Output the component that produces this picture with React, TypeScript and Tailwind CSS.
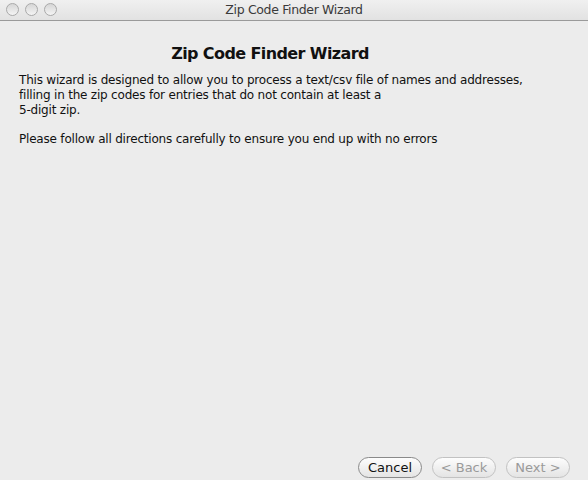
import React from "react";

function Light() {
  return (
    <div className="w-[13px] h-[13px] rounded-full border border-[#a9a9a9] bg-gradient-to-b from-[#d6d6d6] to-[#f4f4f4]" />
  );
}

function Btn({ label, disabled }: { label: string; disabled?: boolean }) {
  return (
    <div
      className={
        "w-[64px] h-[21px] rounded-full border flex items-center justify-center text-[13px] bg-gradient-to-b from-[#fdfdfd] to-[#e4e4e4] " +
        (disabled ? "border-[#c2c2c2] text-[#9a9a9a]" : "border-[#8a8a8a] text-[#111]")
      }
    >
      {label}
    </div>
  );
}

export default function App() {
  return (
    <div
      className="w-[588px] h-[480px] flex flex-col bg-[#ececec] overflow-hidden"
      style={{ fontFamily: '"DejaVu Sans", "Liberation Sans", sans-serif' }}
    >
      <div className="h-[21px] relative flex items-center justify-center border-b border-[#9a9a9a] bg-gradient-to-b from-[#f0f0f0] to-[#e2e2e2] shrink-0">
        <div className="absolute left-[6px] top-[3px] flex gap-[6px]">
          <Light />
          <Light />
          <Light />
        </div>
        <span className="text-[12.5px] text-[#3a3a3a] tracking-[-0.35px]">Zip Code Finder Wizard</span>
      </div>
      <div className="flex-1 flex flex-col pl-[19px] pt-[22px]">
        <div className="w-[502px] text-center font-bold text-[16px] text-[#111] leading-[22px] tracking-[-0.6px]">
          Zip Code Finder Wizard
        </div>
        <div className="mt-[8px] text-[12px] leading-[14.75px] text-[#111] tracking-[-0.2px]">
          <div>This wizard is designed to allow you to process a text/csv file of names and addresses,</div>
          <div>filling in the zip codes for entries that do not contain at least a</div>
          <div>5-digit zip.</div>
          <div className="mt-[14.75px]">Please follow all directions carefully to ensure you end up with no errors</div>
        </div>
      </div>
      <div className="flex justify-end gap-[10px] pr-[18px] pb-[2px] shrink-0">
        <Btn label="Cancel" />
        <Btn label="< Back" disabled />
        <Btn label="Next >" disabled />
      </div>
    </div>
  );
}
